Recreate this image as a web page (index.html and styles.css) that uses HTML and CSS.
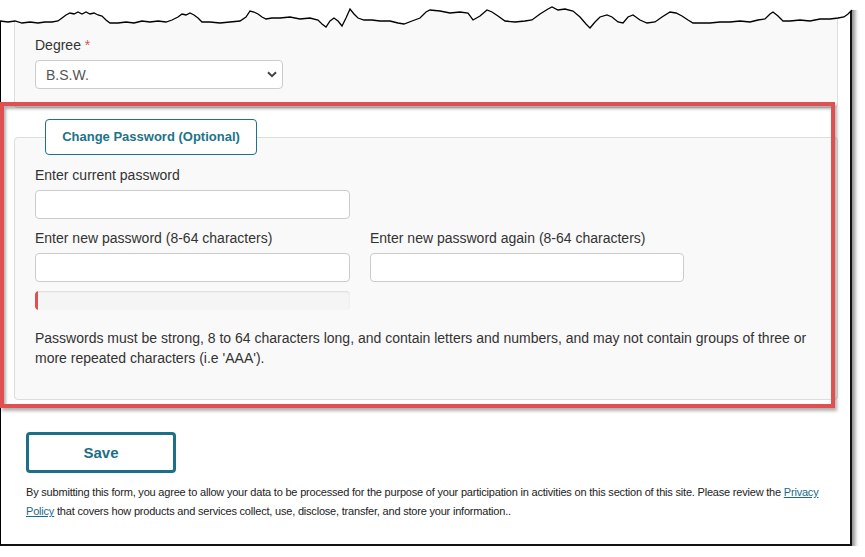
FILE: index.html
```html
<!DOCTYPE html>
<html lang="en">
<head>
    <meta charset="UTF-8">
    <meta name="viewport" content="width=device-width, initial-scale=1.0">
    <title>Profile - Change Password</title>
    <link rel="stylesheet" href="styles.css">
</head>
<body>

<div class="sheet">
    <div class="card">
        <label class="field-label" for="degree">Degree <span class="req">*</span></label>
        <div class="select-wrap">
            <select id="degree" class="form-control">
                <option>B.S.W.</option>
            </select>
            <svg class="chevron" width="10" height="7" viewBox="0 0 10 7">
                <path d="M1 1.2 L5 5.2 L9 1.2" fill="none" stroke="#444" stroke-width="2"/>
            </svg>
        </div>
    </div>

    <fieldset class="password-box">
        <legend><span>Change Password (Optional)</span></legend>
        <div class="field">
            <label class="field-label" for="current">Enter current password</label>
            <input type="password" id="current" class="form-control">
        </div>
        <div class="pw-row">
            <div class="field">
                <label class="field-label" for="newpw">Enter new password (8-64 characters)</label>
                <input type="password" id="newpw" class="form-control">
                <div class="progress">
                    <div class="progress-bar" style="width: 1%"></div>
                </div>
            </div>
            <div class="field">
                <label class="field-label" for="newpw2">Enter new password again (8-64 characters)</label>
                <input type="password" id="newpw2" class="form-control">
            </div>
        </div>
        <p class="help">Passwords must be strong, 8 to 64 characters long, and contain letters and numbers, and may not contain groups of three or more repeated characters (i.e 'AAA').</p>
    </fieldset>

    <div class="actions">
        <button type="button" class="btn-save">Save</button>
        <p class="legal">By submitting this form, you agree to allow your data to be processed for the purpose of your participation in activities on this section of this site. Please review the <a href="#">Privacy Policy</a> that covers how products and services collect, use, disclose, transfer, and store your information..</p>
    </div>

    <!-- annotation frame -->
    <div class="highlight"></div>

    <!-- torn paper edge -->
    <svg class="torn" width="866" height="34" viewBox="0 0 866 34">
        <polygon fill="#fff" points="0,0 0,21 8,22 15,21 22,23 30,22 38,23 45,22 52,22 58,21 62,18 66,15 70,13 74,14 78,12 82,14 86,12 90,14 94,13 98,15 102,16 106,20 110,23 118,23 126,22 134,23 142,21 150,22 158,21 166,22 172,20 178,17 182,14 186,15 190,13 194,15 198,18 202,22 210,22 220,23 230,22 240,21 246,17 250,11 254,12 258,14 262,17 266,19 272,18 280,18 290,17 300,19 310,18 318,20 322,24 326,27 330,21 334,18 338,21 342,26 346,18 350,9 354,14 358,18 364,20 372,20 380,21 390,21 398,23 404,24 412,21 420,18 426,12 430,10 440,11 450,13 460,12 468,13 473,20 480,16 487,10 492,12 498,16 505,21 515,22 525,21 532,20 540,14 548,9 552,7 558,10 565,9 573,11 580,17 586,24 590,28 595,22 600,17 607,15 612,17 618,22 623,23 628,17 633,15 640,20 647,23 655,22 662,17 670,12 676,13 682,16 688,20 693,23 700,23 710,23 720,22 730,22 740,21 750,22 758,20 765,19 770,14 773,12 778,16 783,21 790,21 800,20 810,21 820,19 830,19 838,18 844,17 848,14 852,10 866,10 866,0"/>
        <polyline fill="none" stroke="#000" stroke-width="1.3" points="0,21 8,22 15,21 22,23 30,22 38,23 45,22 52,22 58,21 62,18 66,15 70,13 74,14 78,12 82,14 86,12 90,14 94,13 98,15 102,16 106,20 110,23 118,23 126,22 134,23 142,21 150,22 158,21 166,22 172,20 178,17 182,14 186,15 190,13 194,15 198,18 202,22 210,22 220,23 230,22 240,21 246,17 250,11 254,12 258,14 262,17 266,19 272,18 280,18 290,17 300,19 310,18 318,20 322,24 326,27 330,21 334,18 338,21 342,26 346,18 350,9 354,14 358,18 364,20 372,20 380,21 390,21 398,23 404,24 412,21 420,18 426,12 430,10 440,11 450,13 460,12 468,13 473,20 480,16 487,10 492,12 498,16 505,21 515,22 525,21 532,20 540,14 548,9 552,7 558,10 565,9 573,11 580,17 586,24 590,28 595,22 600,17 607,15 612,17 618,22 623,23 628,17 633,15 640,20 647,23 655,22 662,17 670,12 676,13 682,16 688,20 693,23 700,23 710,23 720,22 730,22 740,21 750,22 758,20 765,19 770,14 773,12 778,16 783,21 790,21 800,20 810,21 820,19 830,19 838,18 844,17 848,14 852,10"/>
    </svg>
</div>

</body>
</html>
```

FILE: styles.css
```css
* {
    margin: 0;
    padding: 0;
    box-sizing: border-box;
}

body {
    background: #fff;
    font-family: 'Liberation Sans', Arial, sans-serif;
    font-size: 14px;
    line-height: 20px;
    color: #333;
}

.sheet {
    position: relative;
    width: 852px;
    height: 546px;
    padding-left: 13px;
    background: #fff;
    border-left: 1px solid #000;
    border-right: 2px solid #111;
    border-bottom: 2px solid #111;
    box-shadow: 3px 3px 4px rgba(0, 0, 0, 0.45);
}

.card {
    width: 824px;
    padding: 34px 20px 18px;
    background: #f9f9f9;
    border: 1px solid #ddd;
    border-radius: 0 0 4px 4px;
}

.field-label {
    display: block;
    margin-bottom: 5px;
    color: #333;
}

.req {
    color: #d9534f;
}

.form-control {
    display: block;
    width: 315px;
    height: 29px;
    padding: 0 10px;
    background: #fff;
    border: 1px solid #ccc;
    border-radius: 4px;
    font-family: inherit;
    font-size: 14px;
    color: #555;
    outline: 0;
}

.select-wrap {
    position: relative;
    width: 248px;
}

.select-wrap select {
    width: 248px;
    appearance: none;
    -webkit-appearance: none;
}

.chevron {
    position: absolute;
    right: 6px;
    top: 11px;
}

.password-box {
    width: 824px;
    min-width: 0;
    margin-top: 11px;
    padding: 10px 20px 31px;
    background: #f9f9f9;
    border: 1px solid #ddd;
    border-radius: 4px;
}

.password-box legend {
    width: 212px;
    margin-left: 10px;
    padding: 7px 0;
    background: #fff;
    border: 1px solid #1d7389;
    border-radius: 4px;
    font-size: 13px;
    font-weight: bold;
    color: #1d7389;
}

.password-box legend span {
    display: block;
    text-align: center;
}

.field + .pw-row {
    margin-top: 9px;
}

.pw-row {
    display: flex;
    gap: 20px;
}

.pw-row .form-control {
    width: 315px;
}

.pw-row .field:last-child .form-control {
    width: 314px;
}

.progress {
    width: 315px;
    height: 19px;
    margin-top: 9px;
    background: #f5f5f5;
    border-radius: 4px;
    box-shadow: inset 0 1px 2px rgba(0, 0, 0, 0.1);
    overflow: hidden;
}

.progress-bar {
    height: 100%;
    min-width: 3px;
    background: #d9534f;
    border-radius: 4px 0 0 4px;
}

.help {
    margin-top: 18px;
    width: 783px;
}

.actions {
    padding-left: 12px;
}

.btn-save {
    display: block;
    width: 150px;
    height: 41px;
    margin-top: 32px;
    background: #fff;
    border: 3px solid #1b6f86;
    border-radius: 4px;
    font-family: 'Liberation Sans', Arial, sans-serif;
    font-size: 15px;
    font-weight: bold;
    color: #1b6f86;
    cursor: pointer;
}

.legal {
    width: 800px;
    margin-top: 10px;
    font-size: 11px;
    line-height: 19px;
    letter-spacing: -0.2px;
    color: #222;
}

.legal a {
    color: #1a6a8a;
}

.highlight {
    position: absolute;
    left: -1px;
    top: 102px;
    width: 835px;
    height: 306px;
    border: 4px solid #e05050;
    box-shadow: 2px 3px 3px rgba(0, 0, 0, 0.3), inset 2px 3px 3px rgba(0, 0, 0, 0.3);
    pointer-events: none;
}

.torn {
    position: absolute;
    left: -1px;
    top: 0;
}
```
